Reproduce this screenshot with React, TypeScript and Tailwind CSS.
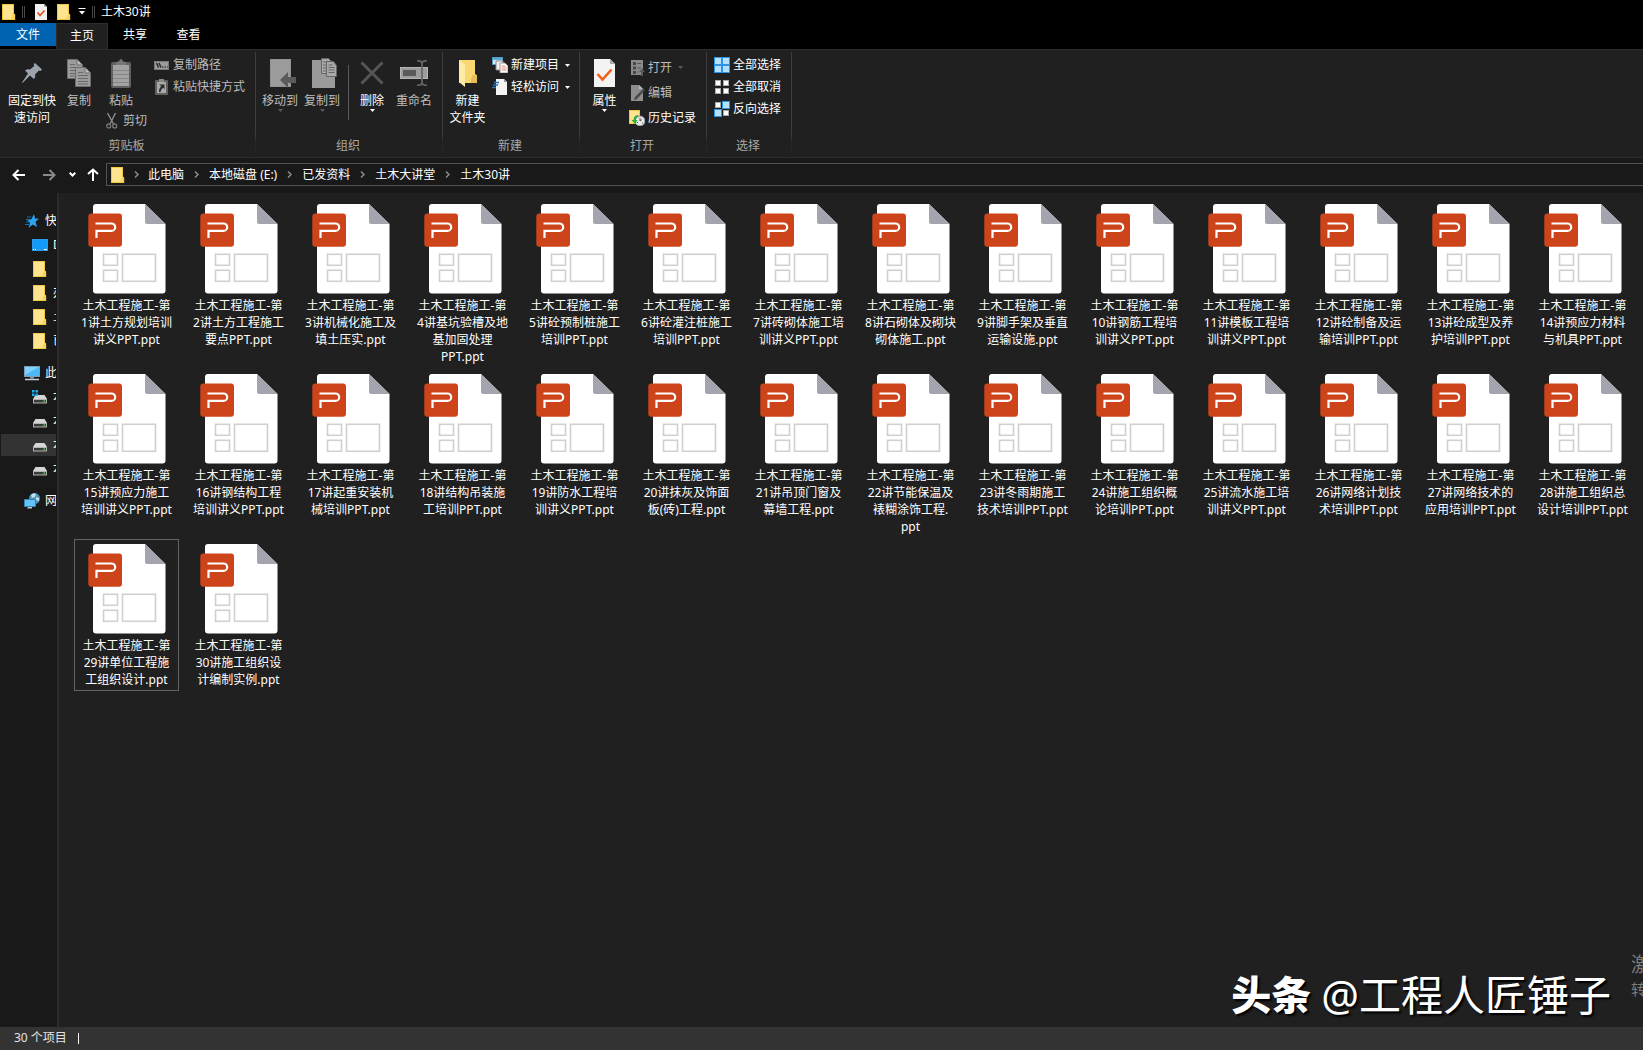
import type { ReactNode } from 'react';

const FILES = [
  '土木工程施工-第\n1讲土方规划培训\n讲义PPT.ppt',
  '土木工程施工-第\n2讲土方工程施工\n要点PPT.ppt',
  '土木工程施工-第\n3讲机械化施工及\n填土压实.ppt',
  '土木工程施工-第\n4讲基坑验槽及地\n基加固处理\nPPT.ppt',
  '土木工程施工-第\n5讲砼预制桩施工\n培训PPT.ppt',
  '土木工程施工-第\n6讲砼灌注桩施工\n培训PPT.ppt',
  '土木工程施工-第\n7讲砖砌体施工培\n训讲义PPT.ppt',
  '土木工程施工-第\n8讲石砌体及砌块\n砌体施工.ppt',
  '土木工程施工-第\n9讲脚手架及垂直\n运输设施.ppt',
  '土木工程施工-第\n10讲钢筋工程培\n训讲义PPT.ppt',
  '土木工程施工-第\n11讲模板工程培\n训讲义PPT.ppt',
  '土木工程施工-第\n12讲砼制备及运\n输培训PPT.ppt',
  '土木工程施工-第\n13讲砼成型及养\n护培训PPT.ppt',
  '土木工程施工-第\n14讲预应力材料\n与机具PPT.ppt',
  '土木工程施工-第\n15讲预应力施工\n培训讲义PPT.ppt',
  '土木工程施工-第\n16讲钢结构工程\n培训讲义PPT.ppt',
  '土木工程施工-第\n17讲起重安装机\n械培训PPT.ppt',
  '土木工程施工-第\n18讲结构吊装施\n工培训PPT.ppt',
  '土木工程施工-第\n19讲防水工程培\n训讲义PPT.ppt',
  '土木工程施工-第\n20讲抹灰及饰面\n板(砖)工程.ppt',
  '土木工程施工-第\n21讲吊顶门窗及\n幕墙工程.ppt',
  '土木工程施工-第\n22讲节能保温及\n裱糊涂饰工程.\nppt',
  '土木工程施工-第\n23讲冬雨期施工\n技术培训PPT.ppt',
  '土木工程施工-第\n24讲施工组织概\n论培训PPT.ppt',
  '土木工程施工-第\n25讲流水施工培\n训讲义PPT.ppt',
  '土木工程施工-第\n26讲网络计划技\n术培训PPT.ppt',
  '土木工程施工-第\n27讲网络技术的\n应用培训PPT.ppt',
  '土木工程施工-第\n28讲施工组织总\n设计培训PPT.ppt',
  '土木工程施工-第\n29讲单位工程施\n工组织设计.ppt',
  '土木工程施工-第\n30讲施工组织设\n计编制实例.ppt',
];

const SELECTED = 28;

const CRUMBS = ['此电脑', '本地磁盘 (E:)', '已发资料', '土木大讲堂', '土木30讲'];

/* ---------- icons ---------- */

const PptIcon = () => (
  <svg width="78" height="90" viewBox="0 0 78 90" aria-hidden="true">
    <path d="M8 0H57L77.500 20V86.500a3 3 0 0 1-3 3H8a3 3 0 0 1-3-3V3a3 3 0 0 1 3-3z" fill="#fff" />
    <path d="M57 0L77.500 20H59a2 2 0 0 1-2-2z" fill="#a4a4ae" />
    <rect x="0.300" y="9.500" width="33.700" height="33.200" rx="3" fill="#cd431a" />
    <path
      d="M7.500 19.500H23.500a3.700 3.700 0 0 1 0 7.400H8.500V34"
      fill="none"
      stroke="#fff"
      strokeWidth="2.200"
    />
    <g fill="none" stroke="#d0d0d0" strokeWidth="1.600">
      <rect x="15.500" y="50.300" width="14" height="11" />
      <rect x="15.500" y="66.300" width="14" height="11" />
      <rect x="34.500" y="50.300" width="33" height="27" />
    </g>
  </svg>
);

const FolderIcon = () => (
  <svg width="14" height="16" viewBox="0 0 14 16" aria-hidden="true" className="shrink-0">
    <path d="M0 0H12V9.500L13.200 10.500V16H0z" fill="#f2c83e" />
    <path d="M1 1H11V15H1z" fill="#ffe48f" />
    <path d="M11 10h1.500v5H9.500V13z" fill="#f8d463" />
  </svg>
);

const TitleDocIcon = () => (
  <svg width="12" height="16" viewBox="0 0 12 16" aria-hidden="true">
    <path d="M0 0H9L12 3V16H0z" fill="#f1f1f1" />
    <path d="M9 0v3h3z" fill="#aaa" />
    <path d="M2.500 8.500l2.500 3 4.500-5" fill="none" stroke="#e8501e" strokeWidth="1.700" />
  </svg>
);

const PinIcon = () => (
  <svg width="22" height="20" viewBox="0 0 22 20" aria-hidden="true">
    <path
      d="M14 0L21 6.500L19.500 8L18 7.500L14 11.500C14.500 13.500 14 15 12.800 16L9 12.500L1.500 20L1 19.500L7 10.500L4 7.500C5.500 6.300 7 6 9 6.500L13.200 3L12.700 1.300z"
      fill="#9ba4ac"
    />
  </svg>
);

const SheetLines = ({ x, y }: { x: number; y: number }) => (
  <g transform={`translate(${x} ${y})`}>
    <path d="M.500 .500H10L15.500 6V19.500H.500z" fill="#9c9c9c" stroke="#6e6e6e" />
    <path d="M10 .500V6h5.500" fill="#bcbcbc" stroke="#6e6e6e" />
    <path d="M3 5.500h5M3 8.500h10M3 11.500h10M3 14.500h10M3 17h10" stroke="#6a6a6a" />
  </g>
);

const CopyIcon = () => (
  <svg width="24" height="28" viewBox="0 0 24 28" aria-hidden="true">
    <SheetLines x={0} y={0} />
    <SheetLines x={8} y={8} />
  </svg>
);

const PasteIcon = () => (
  <svg width="20" height="29" viewBox="0 0 20 29" aria-hidden="true">
    <rect x="0" y="3" width="20" height="26" rx="2" fill="#606060" />
    <rect x="2" y="6" width="16" height="21" fill="#a3a3a3" />
    <path d="M5 6V4q0-1.500 2-1.500h1Q8.500 0 10 0t2 2.500h1q2 0 2 1.500v2z" fill="#777" />
    <path d="M2 11.500h16M2 15.500h16M2 19.500h16M2 23.500h16" stroke="#858585" />
  </svg>
);

const ScissorsIcon = () => (
  <svg width="12" height="16" viewBox="0 0 12 16" fill="none" aria-hidden="true">
    <path d="M1.500 0L7.500 11M9.500 0L4 11" stroke="#8b8b8b" strokeWidth="1.400" />
    <circle cx="2.700" cy="13" r="2" stroke="#777" strokeWidth="1.300" />
    <circle cx="8.700" cy="13" r="2" stroke="#777" strokeWidth="1.300" />
  </svg>
);

const PathIcon = () => (
  <svg width="16" height="16" viewBox="0 0 16 16" aria-hidden="true">
    <rect x=".500" y="4.500" width="14" height="8" fill="#9a9a9a" stroke="#777" />
    <path d="M2.500 6l2 4.500M5 6l2 4.500" stroke="#222" strokeWidth="1.400" />
    <path d="M8 10h1.500M10.500 10H12M13 10h1" stroke="#222" />
  </svg>
);

const ShortcutIcon = () => (
  <svg width="16" height="16" viewBox="0 0 16 16" aria-hidden="true">
    <rect x="1" y="1" width="13" height="15" rx="1" fill="#606060" />
    <rect x="3" y="3" width="9" height="11" fill="#a9a9a9" />
    <path d="M5 0h5v3H5z" fill="#888" />
    <path d="M5 5.500h5.500V10L9 8.800Q6.800 10.500 6.500 13H5Q4.800 9.500 7.200 7z" fill="#2c2c2c" />
  </svg>
);

const MoveToIcon = () => (
  <svg width="32" height="29" viewBox="-6 0 32 29" aria-hidden="true">
    <path d="M0 0H21V28H0z" fill="#929292" />
    <path d="M1 1H20V27H1z" fill="#9c9c9c" />
    <path d="M10 21L18 13V18H26V24H18V29z" fill="#5b5b5b" />
  </svg>
);

const CopyToIcon = () => (
  <svg width="30" height="30" viewBox="-5 0 30 30" aria-hidden="true">
    <path d="M0 2H19L23 16V30H0z" fill="#9a9a9a" />
    <g fill="#a8a8a8" stroke="#666">
      <path d="M9.500 .500h7l3 3v12h-10z" />
      <path d="M11 4h5M11 7h6M11 10h6M11 13h6" />
      <path d="M14.500 3.500h7l3 4v11h-10z" />
      <path d="M16.500 7h4M16.500 9.500h6M16.500 12h6M16.500 14.500h6" />
    </g>
  </svg>
);

const DeleteIcon = () => (
  <svg width="24" height="24" viewBox="0 0 24 24" aria-hidden="true">
    <path d="M1.500 1.500L22.500 22.500M22.500 1.500L1.500 22.500" stroke="#555" strokeWidth="3" />
  </svg>
);

const RenameIcon = () => (
  <svg width="28" height="26" viewBox="0 0 28 26" aria-hidden="true">
    <rect x=".500" y="7.500" width="27" height="11" fill="#9c9c9c" stroke="#b5b5b5" />
    <rect x="3" y="10" width="13" height="6" fill="#5a5a5a" />
    <path
      d="M17 .700q4 0 5 2q1-2 5-2M22 2v22M17 25.300q4 0 5-2q1 2 5 2"
      fill="none"
      stroke="#666"
      strokeWidth="1.800"
    />
  </svg>
);

const NewFolderIcon = () => (
  <svg width="18" height="27" viewBox="0 0 18 27" aria-hidden="true">
    <path d="M0 0H16V14L18 15.500V23H0z" fill="#f9d873" />
    <path d="M0 0L6 4.500V27L0 22z" fill="#ffeaa8" />
    <path d="M12 18h1v-3h3v-1l2 1.500V23h-6z" fill="#e9bd55" />
  </svg>
);

const NewItemIcon = () => (
  <svg width="16" height="16" viewBox="0 0 16 16" aria-hidden="true">
    <rect x=".500" y=".500" width="10" height="7" fill="#d5ecf8" stroke="#4d9cc8" />
    <path d="M1 1h9v2H1z" fill="#5eaad2" />
    <path d="M4 4h7v9H4z" fill="#f1f1f1" stroke="#888" />
    <path d="M8 6h5l3 3v7H8z" fill="#fff" stroke="#999" />
    <path d="M9.500 9h4M9.500 11h5M9.500 13h5" stroke="#e08a78" />
  </svg>
);

const EasyAccessIcon = () => (
  <svg width="16" height="16" viewBox="0 0 16 16" aria-hidden="true">
    <path d="M4 0h8l3 3v13H4z" fill="#f3f3f3" />
    <path d="M12 0v3h3z" fill="#999" />
    <path d="M2 3.500h5M1 6h5M0 8.500h4" stroke="#2a73b8" strokeWidth="1.400" />
  </svg>
);

const PropertiesIcon = () => (
  <svg width="21" height="28" viewBox="0 0 21 28" aria-hidden="true">
    <path d="M0 0H16L21 5V28H0z" fill="#f3f3f3" />
    <path d="M16 0v5h5z" fill="#aaa" />
    <path d="M3.500 15l5 5.500L17.500 10.500" fill="none" stroke="#f2601e" strokeWidth="2.600" />
  </svg>
);

const OpenIcon = () => (
  <svg width="16" height="16" viewBox="0 0 16 16" aria-hidden="true">
    <path d="M2 0h12v15H2z" fill="#8a8a8a" />
    <path d="M4 2h3v3H4zM4 6.500h3v3H4zM4 11h3v3H4z" fill="#484848" />
    <path d="M8.500 3.500H12M8.500 8H12M8.500 12H10" stroke="#505050" />
    <path d="M12 16V12h-2l3-3.500L16 12h-2v4z" fill="#5b5b5b" />
  </svg>
);

const EditIcon = () => (
  <svg width="16" height="16" viewBox="0 0 16 16" aria-hidden="true">
    <path d="M2 0h8l4 4v12H2z" fill="#8d8d8d" />
    <path d="M10 0v4h4z" fill="#bbb" />
    <path d="M5 15l1-3 8.500-8.500 1.500 1.500L8 14z" fill="#4a4a4a" />
  </svg>
);

const HistoryIcon = () => (
  <svg width="16" height="16" viewBox="0 0 16 16" aria-hidden="true">
    <path d="M0 0H11V14H0z" fill="#f0c643" />
    <path d="M1 1H10V13H1z" fill="#ffe48f" />
    <circle cx="11" cy="11" r="5" fill="#e9e9e9" stroke="#888" />
    <path d="M11 8v3l2-1.500M8 12.500h1M13 13h1" stroke="#555" fill="none" />
    <path d="M9 5Q4.500 5.500 4.500 10H2.500L6 14L8.500 10H6.800Q7 7.500 9 6.800z" fill="#2fae3a" />
  </svg>
);

// filled = blue cell, otherwise small white box
const SelectIcon = ({ cells }: { cells: boolean[] }) => (
  <svg width="16" height="16" viewBox="0 0 16 16" aria-hidden="true">
    {cells.map((filled, i) => {
      const x = (i % 2) * 8;
      const y = Math.floor(i / 2) * 8;
      return filled ? (
        <rect key={i} x={x + 0.5} y={y + 0.5} width="7" height="7" fill="#b5e0fb" stroke="#2f93e6" />
      ) : (
        <rect key={i} x={x + 1.5} y={y + 1.5} width="5" height="5" fill="#fff" stroke="#a9a9a9" />
      );
    })}
  </svg>
);

const Caret = ({ className }: { className: string }) => (
  <svg width="5" height="3" viewBox="0 0 5 3" className={className} aria-hidden="true">
    <path d="M0 0h5L2.500 3z" fill="currentColor" />
  </svg>
);

const StarIcon = () => (
  <svg width="16" height="16" viewBox="0 0 16 16" aria-hidden="true">
    <path
      d="M10 1l1 4.500 4 .300-3.500 3L13 14l-4.300-2.500L4.500 15l1.500-5L3.500 7.500 7.500 6z"
      fill="#2ca4ee"
    />
    <path d="M3 4h4M2 6.500h4M2 9h4M1 11.500h4" stroke="#1b6fb0" />
  </svg>
);

const DesktopIcon = () => (
  <svg width="16" height="12" viewBox="0 0 16 12" aria-hidden="true">
    <rect width="16" height="12" fill="#2b9cea" />
    <path d="M1 1h14v9H1z" fill="#129bf8" />
    <path d="M1 10.500h1M3 10.500h1M12 10.500h3" stroke="#fff" />
  </svg>
);

const PcIcon = () => (
  <svg width="16" height="15" viewBox="0 0 16 15" aria-hidden="true">
    <rect x=".500" y=".500" width="15" height="10" fill="#4db8f5" stroke="#7a9db3" />
    <path d="M1 1h14L1 9z" fill="#7fd0fb" />
    <path d="M6 11h4v1.500H6z" fill="#8397a3" />
    <path d="M1 13.500h14" stroke="#c3d0d8" strokeWidth="1.500" />
  </svg>
);

const DriveIcon = ({ system }: { system?: boolean }) => (
  <svg width="16" height="14" viewBox="0 0 16 14" aria-hidden="true">
    <path d="M3.500 5h9L15 9H1z" fill="#d6d6d6" />
    <path d="M1 9h14v4.500H1z" fill="#b4b4b4" />
    <path d="M2 10h12v2.500H2z" fill="#3c3c3c" />
    <path d="M11.500 10.500h1.500v1.500h-1.500z" fill="#4fe04f" />
    {system && <path d="M0 0h2.500v2.500H0zM3.500 0H6v2.500H3.500zM0 3.500h2.500V6H0zM3.500 3.500H6V6H3.500z" fill="#1cb2f2" />}
  </svg>
);

const NetworkIcon = () => (
  <svg width="16" height="16" viewBox="0 0 16 16" aria-hidden="true">
    <circle cx="10.500" cy="5.500" r="5.500" fill="#4f94b8" />
    <path d="M7 2q3-3 5-1l-1 3-3 1zM12 4l3 1v3l-3-1z" fill="#bfe2ee" />
    <path d="M.500 6.500h11v7H.500z" fill="#63c3f8" stroke="#3a83ad" />
    <path d="M4 14h4v1.500H3z" fill="#b5c6d0" />
  </svg>
);

/* ---------- ribbon ---------- */

type BigButtonProps = {
  icon: ReactNode;
  label: string;
  width: string;
  enabled?: boolean;
  caret?: boolean;
};

const BigButton = ({ icon, label, width, enabled, caret }: BigButtonProps) => (
  <button
    type="button"
    className={`flex shrink-0 flex-col items-center pt-0.5 leading-[17px] ${width} ${
      enabled ? 'text-white' : 'text-[#bdbdbd]'
    }`}
  >
    <span className="flex h-9 items-center justify-center pb-0.5">{icon}</span>
    <span className="whitespace-pre">{label}</span>
    {caret && <Caret className={enabled ? 'text-white' : 'text-[#5a5a5a]'} />}
  </button>
);

type SmallButtonProps = {
  icon: ReactNode;
  label: string;
  height: string;
  enabled?: boolean;
  caret?: boolean;
};

const SmallButton = ({ icon, label, height, enabled, caret }: SmallButtonProps) => (
  <button
    type="button"
    className={`flex items-center gap-[3px] whitespace-nowrap ${height} ${
      enabled ? 'text-white' : 'text-[#bdbdbd]'
    }`}
  >
    {icon}
    <span>{label}</span>
    {caret && <Caret className={`ml-[3px] ${enabled ? 'text-white' : 'text-[#5a5a5a]'}`} />}
  </button>
);

const Group = ({ label, width, children }: { label: string; width: string; children: ReactNode }) => (
  <section className={`flex shrink-0 ${width}`} aria-label={label}>
    <div className="flex flex-1 flex-col">
      <div className="flex flex-1 items-start pt-1">{children}</div>
      <div className="h-5 pr-0.5 text-center leading-[18px] text-[#a8a8a8]">{label}</div>
    </div>
    <div className="mt-0.5 mb-1 w-px bg-linear-to-b from-[#3f3f3f] from-80% to-[#262626] to-90%" />
  </section>
);

const Ribbon = () => (
  <div className="flex h-[109px] overflow-hidden border-y border-[#2d2d2d] bg-[#202020]">
    <Group label="剪贴板" width="w-64">
      <BigButton icon={<PinIcon />} label={'固定到快\n速访问'} width="ml-0.5 w-15" enabled />
      <BigButton icon={<CopyIcon />} label="复制" width="w-[34px]" />
      <div className="flex w-[58px] shrink-0 flex-col items-start pl-2.5">
        <BigButton icon={<PasteIcon />} label="粘贴" width="w-[30px]" />
        <button type="button" className="mt-1 flex h-4 items-center gap-[5px] text-[#bdbdbd]">
          <ScissorsIcon />
          <span>剪切</span>
        </button>
      </div>
      <div>
        <SmallButton icon={<PathIcon />} label="复制路径" height="h-[22px]" />
        <SmallButton icon={<ShortcutIcon />} label="粘贴快捷方式" height="h-[22px]" />
      </div>
    </Group>
    <Group label="组织" width="w-[187px]">
      <BigButton icon={<MoveToIcon />} label="移动到" width="ml-[3px] w-[42px]" caret />
      <BigButton icon={<CopyToIcon />} label="复制到" width="w-[42px]" caret />
      <div className="mx-[5px] mt-[11px] h-[55px] w-px bg-[#5a5a5a]" />
      <BigButton icon={<DeleteIcon />} label="删除" width="w-9" enabled caret />
      <BigButton icon={<RenameIcon />} label="重命名" width="w-12" />
    </Group>
    <Group label="新建" width="w-[137px]">
      <BigButton icon={<NewFolderIcon />} label={'新建\n文件夹'} width="w-[49px] text-center" enabled />
      <div>
        <SmallButton icon={<NewItemIcon />} label="新建项目" height="h-[22px]" enabled caret />
        <SmallButton icon={<EasyAccessIcon />} label="轻松访问" height="h-[22px]" enabled caret />
      </div>
    </Group>
    <Group label="打开" width="w-[127px]">
      <BigButton icon={<PropertiesIcon />} label="属性" width="w-[49px]" enabled caret />
      <div className="pt-px">
        <SmallButton icon={<OpenIcon />} label="打开" height="h-[25px]" caret />
        <SmallButton icon={<EditIcon />} label="编辑" height="h-[25px]" />
        <SmallButton icon={<HistoryIcon />} label="历史记录" height="h-[25px]" enabled />
      </div>
    </Group>
    <Group label="选择" width="w-[85px]">
      <div className="pl-[7px]">
        <SmallButton icon={<SelectIcon cells={[true, true, true, true]} />} label="全部选择" height="h-[22px]" enabled />
        <SmallButton icon={<SelectIcon cells={[false, false, false, false]} />} label="全部取消" height="h-[22px]" enabled />
        <SmallButton icon={<SelectIcon cells={[false, true, true, false]} />} label="反向选择" height="h-[22px]" enabled />
      </div>
    </Group>
  </div>
);

/* ---------- window chrome ---------- */

const TitleBar = () => (
  <header className="flex h-[23px] items-center bg-black pl-0.5">
    <FolderIcon />
    <span className="ml-[6px] h-3 w-[3px] border-x border-[#4a4a4a]" />
    <span className="ml-[10px]">
      <TitleDocIcon />
    </span>
    <span className="ml-[10px]">
      <FolderIcon />
    </span>
    <svg width="8" height="7" viewBox="0 0 8 7" className="ml-[7px]" aria-hidden="true">
      <path d="M1 3h6L4 6.500z" fill="#fff" />
      <path d="M.500 .500h7" stroke="#fff" />
    </svg>
    <span className="ml-[6px] h-3 w-[3px] border-x border-[#4a4a4a]" />
    <h1 className="ml-[6px]">土木30讲</h1>
  </header>
);

const Tabs = () => (
  <nav className="flex h-[26px] bg-black">
    <button type="button" className="h-[23px] w-14 bg-[#0063b1] pt-px">
      文件
    </button>
    <button type="button" className="-mb-px w-[52px] border-x border-t border-[#2d2d2d] bg-[#202020] pb-0.5">
      主页
    </button>
    <button type="button" className="w-[54px] pb-0.5">
      共享
    </button>
    <button type="button" className="w-[53px] pb-0.5">
      查看
    </button>
  </nav>
);

const AddressBar = () => (
  <div className="flex h-[35px] items-center bg-[#191919] pb-0.5">
    <div className="flex w-[106px] shrink-0 items-center pl-3">
      <button type="button" aria-label="后退">
        <svg width="14" height="12" viewBox="0 0 14 12" fill="none" stroke="#fff" strokeWidth="2" aria-hidden="true">
          <path d="M6.500 1L1.500 6L6.500 11M1.500 6H13" />
        </svg>
      </button>
      <button type="button" aria-label="前进" className="ml-4">
        <svg width="14" height="12" viewBox="0 0 14 12" fill="none" stroke="#8a8a8a" strokeWidth="2" aria-hidden="true">
          <path d="M7.500 1L12.500 6L7.500 11M12.500 6H1" />
        </svg>
      </button>
      <button type="button" aria-label="最近浏览的位置" className="ml-[13px]">
        <svg width="7" height="5" viewBox="0 0 7 5" fill="none" stroke="#fff" strokeWidth="2" aria-hidden="true">
          <path d="M.700 .700L3.500 3.500L6.300 .700" />
        </svg>
      </button>
      <button type="button" aria-label="向上" className="ml-[11px]">
        <svg width="12" height="13" viewBox="0 0 12 13" fill="none" stroke="#fff" strokeWidth="2" aria-hidden="true">
          <path d="M1 6L6 1.500L11 6M6 1.500V13" />
        </svg>
      </button>
    </div>
    <div className="flex h-[23px] flex-1 items-center border border-r-0 border-[#535353] pl-1">
      <FolderIcon />
      {CRUMBS.map((crumb, i) => (
        <div key={crumb} className="flex items-center whitespace-nowrap">
          <span className={`flex justify-center ${i === 0 ? 'w-[23px]' : 'w-[25px]'}`}>
            <svg width="5" height="7" viewBox="0 0 5 7" fill="none" stroke="#8c8c8c" strokeWidth="1.500" aria-hidden="true">
              <path d="M1 .500L4 3.500L1 6.500" />
            </svg>
          </span>
          <a href="#">{crumb}</a>
        </div>
      ))}
    </div>
  </div>
);

type NavRowProps = { icon: ReactNode; text?: string; nested?: boolean; active?: boolean };

const NavRow = ({ icon, text, nested, active }: NavRowProps) => (
  <li className="flex h-6 items-center pl-px">
    <a
      href="#"
      className={`flex h-[22px] flex-1 items-center gap-[5px] overflow-hidden whitespace-nowrap ${
        nested ? 'pl-[31px]' : 'pl-[23px]'
      } ${active ? 'bg-[#333]' : ''}`}
    >
      <span className="flex w-4 shrink-0 justify-center">{icon}</span>
      {text}
    </a>
  </li>
);

const Sidebar = () => (
  <aside className="flex w-[59px] shrink-0 border-r-2 border-[#2b2b2b] bg-[#191919] pr-px">
    <div className="w-full overflow-hidden pt-4">
      <ul>
        <NavRow icon={<StarIcon />} text="快" />
        <NavRow icon={<DesktopIcon />} text="D" nested />
        <NavRow icon={<FolderIcon />} nested />
        <NavRow icon={<FolderIcon />} text="办" nested />
        <NavRow icon={<FolderIcon />} text="土" nested />
        <NavRow icon={<FolderIcon />} text="已" nested />
      </ul>
      <ul className="mt-2">
        <NavRow icon={<PcIcon />} text="此" />
        <NavRow icon={<DriveIcon system />} text="本" nested />
        <NavRow icon={<DriveIcon />} text="本" nested />
        <NavRow icon={<DriveIcon />} text="本" nested active />
        <NavRow icon={<DriveIcon />} text="本" nested />
      </ul>
      <ul className="mt-2">
        <NavRow icon={<NetworkIcon />} text="网" />
      </ul>
    </div>
  </aside>
);

const FileGrid = () => (
  <ul className="grid auto-rows-[170px] grid-cols-[repeat(auto-fill,105px)] items-start gap-x-[7px] pt-1.5 pl-[15px]">
    {FILES.map((name, i) => (
      <li
        key={name}
        className={`flex flex-col items-center border pt-1 pb-0.5 ${
          i === SELECTED ? 'border-[#636363]' : 'border-transparent'
        }`}
      >
        <PptIcon />
        <p className="mt-[3px] text-center leading-[17px] whitespace-pre">{name}</p>
      </li>
    ))}
  </ul>
);

const Watermark = () => (
  <div className="absolute right-8 bottom-0 flex items-center gap-[10px] text-[42px] leading-[64px] whitespace-nowrap [text-shadow:2px_2px_2px_#000]">
    <span className="text-[40px] font-black">头条</span>
    <span>@工程人匠锤子</span>
  </div>
);

export default function App() {
  return (
    <div className="flex min-h-screen flex-col overflow-hidden bg-[#202020] font-['Noto_Sans','Noto_Sans_CJK_SC',sans-serif] text-[12px] leading-4 text-white">
      <TitleBar />
      <Tabs />
      <Ribbon />
      <AddressBar />
      <div className="flex flex-1">
        <Sidebar />
        <main className="relative flex-1 overflow-hidden">
          <FileGrid />
          <div className="absolute -right-2 bottom-7 text-[#7c7c7c]">
            <p className="text-[20px] leading-7">激</p>
            <p className="text-[15px] leading-5">转</p>
          </div>
          <Watermark />
        </main>
      </div>
      <footer className="flex h-[23px] items-center bg-[#333] pb-px pl-3.5 text-[#e4e4e4]">
        <span>30 个项目</span>
        <span className="ml-[11px] h-[11px] w-px bg-white" />
      </footer>
    </div>
  );
}
